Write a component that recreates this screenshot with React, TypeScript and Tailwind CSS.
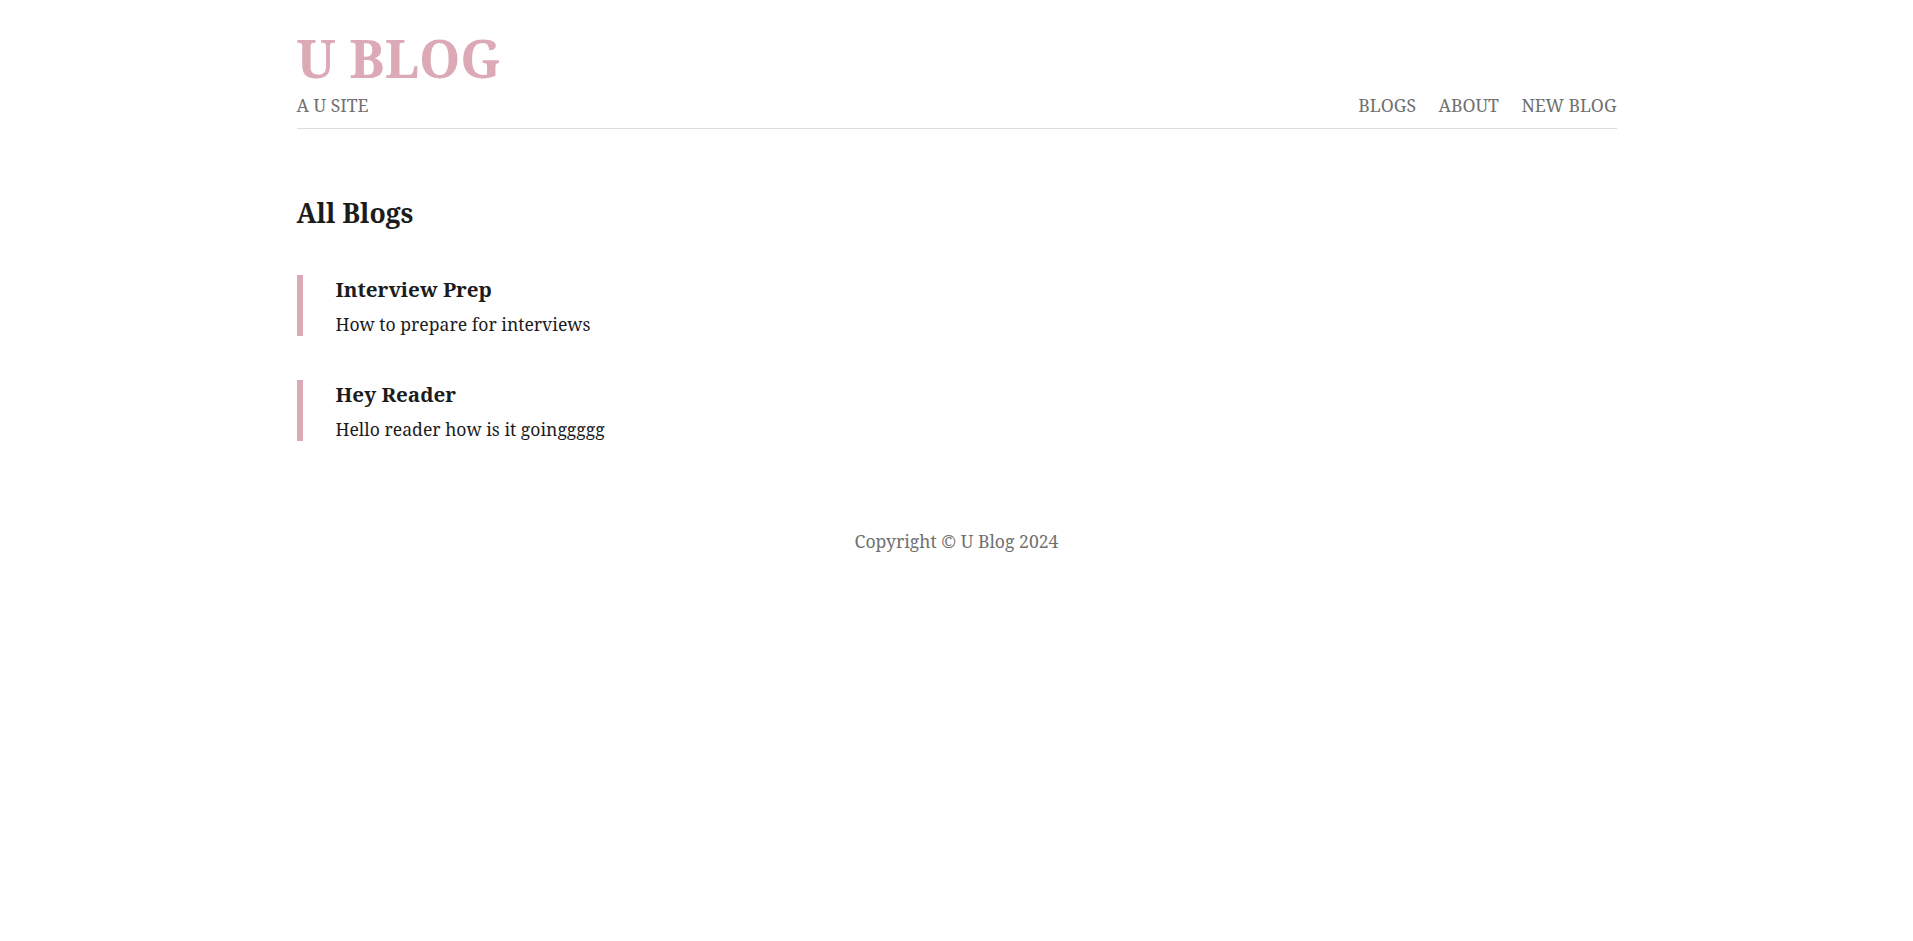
const blogs = [
  { title: 'Interview Prep', description: 'How to prepare for interviews' },
  { title: 'Hey Reader', description: 'Hello reader how is it goinggggg' },
];

const navLinks = ['BLOGS', 'ABOUT', 'NEW BLOG'];

export default function App() {
  return (
    <div className="min-h-screen bg-white font-['Noto_Serif','DejaVu_Serif',serif] text-[#1c1c1c]">
      <div className="mx-auto w-[1320px]">
        <header className="border-b border-[#dddddd] pt-[26px] pb-[9px]">
          <h1 className="text-[52.5px] leading-[64px] font-bold text-[#dcaab6]">U BLOG</h1>
          <div className="mt-[1px] flex items-end justify-between text-[17.6px] leading-[28px] text-[#707070]">
            <span>A U SITE</span>
            <nav className="flex gap-[22.5px]">
              {navLinks.map((link) => (
                <a key={link} href="#" className="hover:text-[#dcaab6]">
                  {link}
                </a>
              ))}
            </nav>
          </div>
        </header>

        <main className="pt-[66px]">
          <h2 className="text-[26.6px] leading-[36px] font-bold">All Blogs</h2>
          <div className="mt-[44px] flex flex-col gap-[44px]">
            {blogs.map((blog) => (
              <article key={blog.title} className="border-l-[6px] border-[#dcaab6] pl-[33px]">
                <h3 className="mb-[9px] text-[20.6px] leading-[28px] font-bold">{blog.title}</h3>
                <p className="text-[17.6px] leading-[24px]">{blog.description}</p>
              </article>
            ))}
          </div>
        </main>

        <footer className="pt-[86px] text-center text-[17.6px] leading-[28px] text-[#707070]">
          Copyright © U Blog 2024
        </footer>
      </div>
    </div>
  );
}
